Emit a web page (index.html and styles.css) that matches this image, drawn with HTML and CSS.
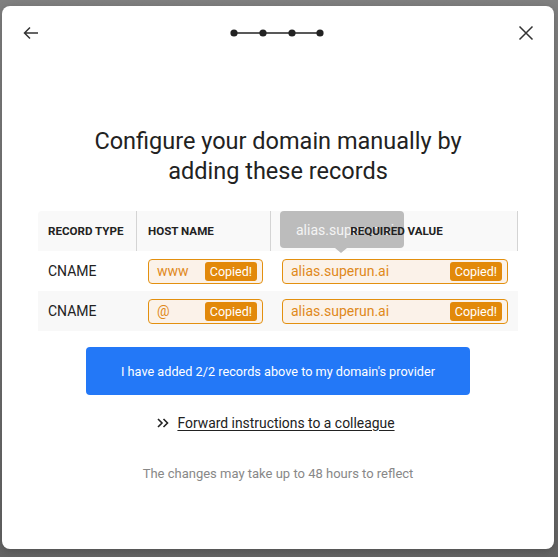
FILE: index.html
```html
<!DOCTYPE html>
<html lang="en">
<head>
<meta charset="UTF-8" />
<meta name="viewport" content="width=device-width, initial-scale=1.0" />
<title>Configure domain</title>
<link rel="stylesheet" href="styles.css">
</head>
<body>
<div class="modal">
  <div class="modal-header">
    <button class="icon-btn" aria-label="Back">
      <svg width="16" height="16" viewBox="0 0 16 16"><path d="M15 8H1.5M7 2.5L1.5 8 7 13.5" fill="none" stroke="#333" stroke-width="1.5"/></svg>
    </button>
    <svg class="steps" width="94" height="10" viewBox="0 0 94 10">
      <line x1="4" y1="5" x2="90" y2="5" stroke="#222" stroke-width="1.5"/>
      <circle cx="4" cy="5" r="3.6" fill="#222"/>
      <circle cx="33" cy="5" r="3.6" fill="#222"/>
      <circle cx="62" cy="5" r="3.6" fill="#222"/>
      <circle cx="90" cy="5" r="3.6" fill="#222"/>
    </svg>
    <button class="icon-btn" aria-label="Close">
      <svg width="16" height="16" viewBox="0 0 16 16"><path d="M1.5 1.5L14.5 14.5M14.5 1.5L1.5 14.5" fill="none" stroke="#333" stroke-width="1.5"/></svg>
    </button>
  </div>

  <h1 class="title">Configure your domain manually by<br>adding these records</h1>

  <div class="records">
    <div class="row head">
      <div class="cell type">RECORD TYPE</div>
      <div class="cell host">HOST NAME</div>
      <div class="cell value">
        <div class="tooltip">alias.superun.ai</div>
        <span class="head-label">REQUIRED VALUE</span>
      </div>
    </div>
    <div class="row">
      <div class="cell type">CNAME</div>
      <div class="cell host">
        <div class="field"><span>www</span><span class="badge">Copied!</span></div>
      </div>
      <div class="cell value">
        <div class="field"><span>alias.superun.ai</span><span class="badge">Copied!</span></div>
      </div>
    </div>
    <div class="row alt">
      <div class="cell type">CNAME</div>
      <div class="cell host">
        <div class="field"><span>@</span><span class="badge">Copied!</span></div>
      </div>
      <div class="cell value">
        <div class="field"><span>alias.superun.ai</span><span class="badge">Copied!</span></div>
      </div>
    </div>
  </div>

  <button class="primary">I have added 2/2 records above to my domain's provider</button>

  <a class="forward" href="#">
    <svg width="12" height="10" viewBox="0 0 12 10"><path d="M1 1l4 4-4 4M6.5 1l4 4-4 4" fill="none" stroke="#222" stroke-width="1.6"/></svg>
    <span>Forward instructions to a colleague</span>
  </a>

  <p class="note">The changes may take up to 48 hours to reflect</p>
</div>
</body>
</html>
```

FILE: styles.css
```css
body {
  margin: 0;
  height: 557px;
  background: linear-gradient(#808080, #646464);
  font-family: Roboto, "Liberation Sans", Arial, sans-serif;
  overflow: hidden;
}
.modal {
  margin: 6px 0 0 2px;
  width: 552px;
  height: 543px;
  background: #fff;
  border-radius: 8px;
  box-shadow: 0 2px 8px rgba(0,0,0,0.2);
  display: flex;
  flex-direction: column;
  align-items: center;
}
.modal-header {
  align-self: stretch;
  height: 54px;
  display: flex;
  align-items: center;
  justify-content: space-between;
  padding: 0 18px 0 19px;
}
.icon-btn {
  width: 20px;
  height: 20px;
  padding: 0;
  border: none;
  background: none;
  display: flex;
  align-items: center;
  justify-content: center;
  cursor: pointer;
}
.steps {
  margin-left: -4px;
}
.title {
  margin: 66px 0 0;
  font-size: 23.5px;
  line-height: 30px;
  font-weight: 400;
  color: #222;
  text-align: center;
}
.records {
  margin-top: 25px;
  width: 480px;
}
.row {
  display: grid;
  grid-template-columns: 99px 134px 247px;
  height: 40px;
}
.row.head {
  background: #f9f9f9;
  border-radius: 4px 4px 0 0;
}
.row.alt {
  background: #f8f8f8;
}
.cell {
  display: flex;
  align-items: center;
  padding-left: 10px;
  font-size: 14px;
  color: #222;
  position: relative;
}
.cell.host,
.cell.value {
  padding-left: 11px;
}
.cell.host {
  padding-right: 8px;
}
.cell.value {
  padding-right: 10px;
}
.head .cell {
  font-size: 11.6px;
  font-weight: 700;
  color: #222;
  border-right: 1px solid #d4d4d4;
}
.head .cell.value {
  justify-content: center;
}
.head-label {
  position: relative;
  z-index: 1;
  margin-left: 4px;
}
.tooltip {
  position: absolute;
  left: 9px;
  top: 0;
  width: 124px;
  height: 37px;
  box-sizing: border-box;
  padding-left: 16px;
  display: flex;
  align-items: center;
  background: #bcbcbc;
  border-radius: 4px;
  color: #f4f4f4;
  font-size: 14px;
  font-weight: 400;
}
.tooltip::after {
  content: "";
  position: absolute;
  left: 55px;
  bottom: -5px;
  border-left: 6px solid transparent;
  border-right: 6px solid transparent;
  border-top: 5px solid #bcbcbc;
}
.field {
  flex: 1;
  height: 25px;
  box-sizing: border-box;
  border: 1px solid #e3900f;
  border-radius: 4px;
  background: #fbf2e9;
  display: flex;
  align-items: center;
  justify-content: space-between;
  padding: 0 5px 0 8px;
  color: #e0891a;
  font-size: 14px;
}
.badge {
  background: #e2890a;
  color: #fff;
  font-size: 12.5px;
  height: 19px;
  line-height: 19px;
  padding: 0 5px;
  border-radius: 3px;
}
.primary {
  margin-top: 16px;
  width: 384px;
  height: 48px;
  border: none;
  border-radius: 4px;
  background: #2378f7;
  color: #fff;
  font-family: inherit;
  font-size: 12.7px;
  cursor: pointer;
}
.forward {
  margin-top: 18px;
  margin-right: 4px;
  display: flex;
  align-items: center;
  gap: 8px;
  height: 20px;
  color: #222;
  font-size: 13.9px;
  text-decoration: none;
}
.forward span {
  text-decoration: underline;
  text-underline-offset: 2px;
}
.note {
  margin: 32px 0 0;
  font-size: 13px;
  line-height: 18px;
  color: #888;
}
```
